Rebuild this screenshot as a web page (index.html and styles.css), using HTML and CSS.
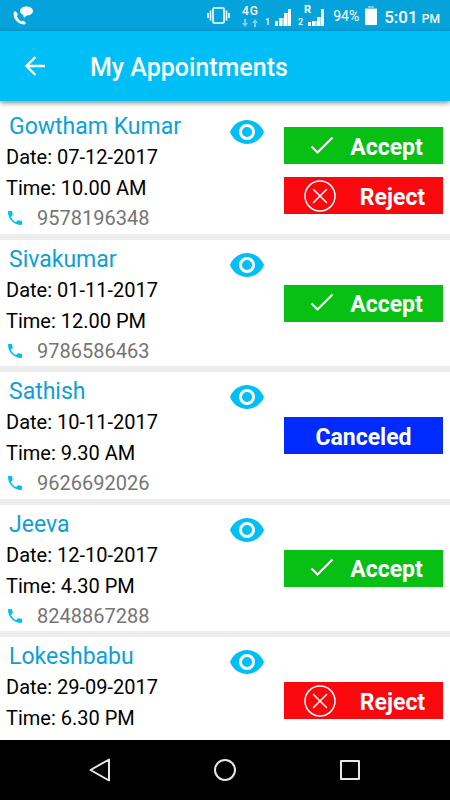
FILE: index.html
```html
<!DOCTYPE html>
<html lang="en">
<head>
<meta charset="utf-8">
<meta name="viewport" content="width=device-width, initial-scale=1">
<title>My Appointments</title>
<link rel="stylesheet" href="styles.css">
</head>
<body>
<svg class="defs" aria-hidden="true">
  <symbol id="eye" viewBox="0 0 34 24"><path fill="currentColor" fill-rule="evenodd" d="M17 0C9.400 0 2.700 4.900 0 12c2.700 7.100 9.400 12 17 12s14.300-4.900 17-12C31.300 4.900 24.600 0 17 0zm0 20a8 8 0 1 1 0-16 8 8 0 0 1 0 16zm0-3a5 5 0 1 0 0-10 5 5 0 0 0 0 10z"/></symbol>
  <symbol id="phone" viewBox="3 3 18 18"><path fill="currentColor" d="M6.620 10.790c1.440 2.830 3.760 5.140 6.590 6.590l2.200-2.200c.27-.27.67-.36 1.020-.24 1.120.37 2.330.57 3.570.57.55 0 1 .45 1 1V20c0 .55-.45 1-1 1-9.390 0-17-7.610-17-17 0-.55.45-1 1-1h3.500c.55 0 1 .45 1 1 0 1.250.2 2.450.57 3.570.11.35.03.74-.25 1.020l-2.200 2.200z"/></symbol>
  <symbol id="check" viewBox="0 0 24 20"><path d="M1.500 10.500l6 6L22.500 1.500" fill="none" stroke="currentColor" stroke-width="2.200"/></symbol>
  <symbol id="cross" viewBox="0 0 32 32"><g fill="none" stroke="currentColor" stroke-width="1.500"><circle cx="16" cy="16" r="15"/><path d="M9.500 9.500l13 13M22.500 9.500l-13 13" stroke-linecap="round"/></g></symbol>
</svg>
<div class="screen">
  <div class="status">
    <svg class="call" width="20" height="19" viewBox="0 0 20 19" fill="#fff"><ellipse cx="13.500" cy="5" rx="6.500" ry="4.500"/><path d="M10 8l1 4 3-3z"/><path d="M1 6C-1 12 5 18.500 11.500 18.500c1 0 1.500-1 1-2l-1.700-1.500c-.8-.7-1.600 0-2.300.5C6 14 4.500 12 3.800 10c.7-.5 1.300-1 .8-2L3.500 6C3 5 1.500 4.700 1 6z"/></svg>
    <svg width="23" height="17" viewBox="0 0 23 17" fill="none" stroke="#fff" stroke-width="1.600"><rect x="6" y="1" width="11" height="15" rx="1"/><path d="M3.500 3.500v10M1 6v5M19.500 3.500v10M22 6v5"/></svg>
    <span class="network">4G
      <svg width="16" height="8" viewBox="0 0 16 8" fill="#80cdec"><path d="M2 0h2v4h2L3 8 0 4h2zM13 0l-3 4h2v4h2V4h2z"/></svg>
    </span>
    <span class="signal"><span class="sim">1</span>
      <svg width="18" height="18" viewBox="0 0 18 18"><path fill="#fff" d="M1 13h3v5H1zM5 10h3v8H5zM10 5h3v13h-3zM14 1h3v17h-3z"/><path fill="#a7dcf1" d="M8 10h2v8H8zM13 5h1v13h-1z"/></svg>
    </span>
    <span class="signal second"><span class="roaming">R</span><span class="sim">2</span>
      <svg width="18" height="18" viewBox="0 0 18 18"><path fill="#fff" d="M1 14h3v4H1zM5 13h3v5H5zM10 9h3v9h-3zM14 1h3v17h-3z"/><path fill="#a7dcf1" d="M8 13h2v5H8zM13 9h1v9h-1z"/></svg>
    </span>
    <span class="percent">94%</span>
    <svg width="12" height="19" viewBox="0 0 12 19"><path fill="#70c9ec" d="M3 0h6v2h3v2H0V2h3z"/><path fill="#fff" d="M0 3h12v15a1 1 0 0 1-1 1H1a1 1 0 0 1-1-1z"/></svg>
    <span class="clock">5:01 <small>PM</small></span>
  </div>
  <header class="appbar">
    <button class="back" aria-label="Back"><svg width="20" height="20" viewBox="0 0 20 20" fill="none" stroke="#fff" stroke-width="2.300"><path d="M20 10H2M10.500 1L1.500 10l9 9"/></svg></button>
    <h1>My Appointments</h1>
  </header>
  <main>
    <ul class="list">
      <li class="row">
        <div class="details"><h2>Gowtham Kumar</h2><p>Date: 07-12-2017</p><p>Time: 10.00 AM</p><a href="tel:9578196348"><svg><use href="#phone"/></svg>9578196348</a></div>
        <button class="view" aria-label="View"><svg><use href="#eye"/></svg></button>
        <div class="actions"><button class="accept"><svg><use href="#check"/></svg><span>Accept</span></button><button class="reject"><svg><use href="#cross"/></svg><span>Reject</span></button></div>
      </li>
      <li class="row">
        <div class="details"><h2>Sivakumar</h2><p>Date: 01-11-2017</p><p>Time: 12.00 PM</p><a href="tel:9786586463"><svg><use href="#phone"/></svg>9786586463</a></div>
        <button class="view" aria-label="View"><svg><use href="#eye"/></svg></button>
        <div class="actions"><button class="accept"><svg><use href="#check"/></svg><span>Accept</span></button></div>
      </li>
      <li class="row">
        <div class="details"><h2>Sathish</h2><p>Date: 10-11-2017</p><p>Time: 9.30 AM</p><a href="tel:9626692026"><svg><use href="#phone"/></svg>9626692026</a></div>
        <button class="view" aria-label="View"><svg><use href="#eye"/></svg></button>
        <div class="actions"><button class="canceled"><span>Canceled</span></button></div>
      </li>
      <li class="row">
        <div class="details"><h2>Jeeva</h2><p>Date: 12-10-2017</p><p>Time: 4.30 PM</p><a href="tel:8248867288"><svg><use href="#phone"/></svg>8248867288</a></div>
        <button class="view" aria-label="View"><svg><use href="#eye"/></svg></button>
        <div class="actions"><button class="accept"><svg><use href="#check"/></svg><span>Accept</span></button></div>
      </li>
      <li class="row">
        <div class="details"><h2>Lokeshbabu</h2><p>Date: 29-09-2017</p><p>Time: 6.30 PM</p></div>
        <button class="view" aria-label="View"><svg><use href="#eye"/></svg></button>
        <div class="actions"><button class="reject"><svg><use href="#cross"/></svg><span>Reject</span></button></div>
      </li>
    </ul>
  </main>
  <nav class="navbar">
    <button aria-label="Back"><svg width="24" height="24" viewBox="0 0 24 24"><path d="M21 1.500v21L2.500 12z"/></svg></button>
    <button aria-label="Home"><svg width="24" height="24" viewBox="0 0 24 24"><circle cx="12" cy="12" r="10"/></svg></button>
    <button aria-label="Recent apps"><svg width="24" height="24" viewBox="0 0 24 24"><rect x="3" y="3" width="18" height="18"/></svg></button>
  </nav>
</div>
</body>
</html>
```
FILE: styles.css
```css
* { box-sizing: border-box; }
body { margin: 0; font-family: Roboto, "Liberation Sans", sans-serif; background: #fff; color: #000; }
button { border: 0; padding: 0; background: none; color: inherit; font: inherit; cursor: pointer; }
svg { display: block; flex: none; }
h1, h2, p, ul { margin: 0; padding: 0; }
.defs { display: none; }
.screen { display: flex; flex-direction: column; height: 100vh; }

.status { display: flex; flex: none; align-items: center; height: 31px; padding: 0 10px 0 13px; background: #05a3dc; color: #fff; }
.call { margin-right: auto; }
.network { display: grid; justify-items: center; gap: 1px; margin-left: 12px; font-size: 12px; line-height: 13px; font-weight: 500; letter-spacing: 1px; }
.signal { position: relative; display: flex; align-items: flex-end; gap: 4px; margin-left: 6px; padding-top: 2px; }
.sim { font-size: 9px; line-height: 8px; font-weight: 500; }
.roaming { position: absolute; left: 6px; top: -2px; font-size: 11px; line-height: 11px; font-weight: 700; }
.percent { margin: 0 6px 0 8px; font-size: 14px; }
.clock { margin-left: 7px; padding-top: 2px; font-size: 17px; font-weight: 500; white-space: nowrap; }
.clock small { font-size: 12px; }

.appbar { position: relative; display: flex; flex: none; align-items: center; gap: 45px; height: 70px; padding: 0 25px; background: #00bef6; color: #fff; box-shadow: 0 2px 5px rgba(0, 0, 0, .45); }
.appbar h1 { padding-top: 4px; font-size: 25px; line-height: 30px; font-weight: 500; }

main { flex: 1; min-height: 0; overflow: hidden; padding-top: 6px; }
.list { list-style: none; }
.row { display: grid; grid-template-columns: minmax(0, 1fr) 34px 159px; column-gap: 20px; min-height: 133px; padding-right: 7px; border-bottom: 6px solid #ededed; }
.row:nth-child(even) { height: 132px; min-height: 0; }
.details { padding: 5px 0 0 6px; font-size: 20px; line-height: 31px; white-space: nowrap; }
.details h2 { padding-left: 3px; font-size: 23px; line-height: 30px; font-weight: 400; color: #0d9fd8; }
.details a { display: flex; align-items: center; gap: 15px; padding-left: 2px; line-height: 29px; color: #757575; text-decoration: none; }
.details a svg { width: 14px; height: 14px; margin-bottom: 2px; color: #00bef6; }
.view { align-self: start; margin-top: 13px; color: #00bef6; }
.view svg { width: 34px; height: 24px; }
.actions { display: flex; flex-direction: column; justify-content: center; gap: 13px; }
.actions button { display: flex; align-items: center; justify-content: center; height: 37px; color: #fff; font-size: 23px; font-weight: 700; }
.actions span { padding-top: 3px; }
.actions .accept { gap: 16px; padding-left: 6px; background: #08bf14; }
.actions .reject { gap: 24px; padding-left: 2px; background: #fa080e; }
.actions .canceled { background: #002bff; }
.accept svg { width: 24px; height: 20px; }
.reject svg { width: 32px; height: 32px; }

.navbar { display: grid; flex: none; grid-template-columns: repeat(3, 125px); justify-content: center; height: 60px; background: #000; }
.navbar button { display: grid; place-items: center; }
.navbar svg { fill: none; stroke: #e6e6e6; stroke-width: 2; stroke-linejoin: round; }
```
